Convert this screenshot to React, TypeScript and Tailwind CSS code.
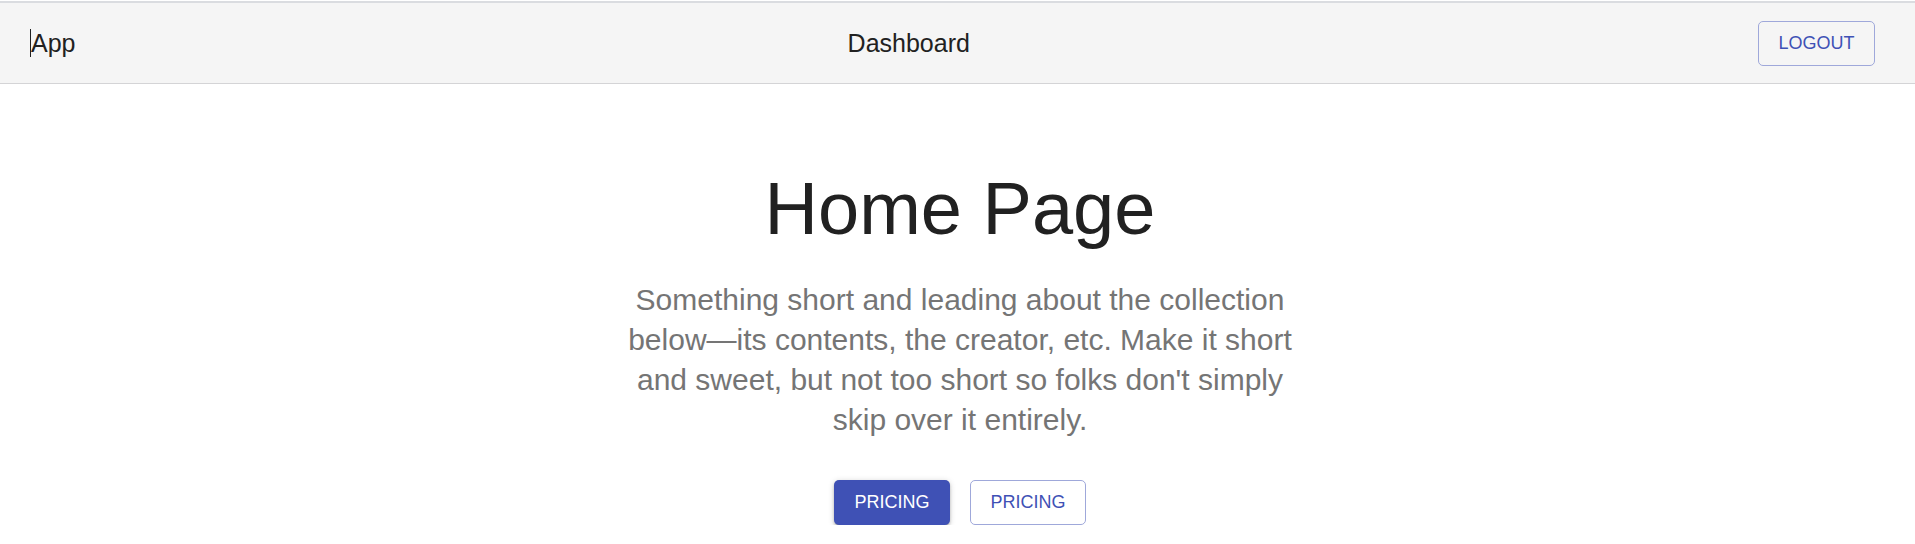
export default function App() {
  return (
    <div className="pt-px font-['Liberation_Sans',Arial,sans-serif] text-[#212121]">
      <header className="flex h-[83px] items-center border-b border-t-2 border-b-[#d4d4d6] border-t-[#dadce0] bg-[#f5f5f5] pl-[30px] pr-10">
        <h6 className="border-l border-[#212121] text-[25px] leading-7">App</h6>
        <nav className="flex-1 pr-4 text-center text-[25px] leading-7">
          <a href="#dashboard">Dashboard</a>
        </nav>
        <button className="h-[45px] min-w-[117px] rounded-[5px] border border-[#9fa8da] px-[18px] text-lg text-[#3f51b5]">LOGOUT</button>
      </header>
      <div className="pl-[5px]">
        <main className="mx-auto flex max-w-[690px] flex-col items-center pt-[81px] text-center">
          <h1 className="text-[74px] leading-[88px]">Home Page</h1>
          <p className="mt-[27px] text-[30px] leading-10 text-[#757575]">
            Something short and leading about the collection below—its contents, the creator, etc. Make it short and sweet, but not too short so folks don't simply skip over it entirely.
          </p>
          <div className="mt-10 flex gap-5">
            <button className="h-[45px] min-w-[116px] rounded-[5px] bg-[#3f51b5] px-[18px] pb-0.5 text-lg text-white [box-shadow:0_3px_1px_-2px_rgba(0,0,0,0.2),0_2px_3px_0_rgba(0,0,0,0.2),0_1px_6px_0_rgba(0,0,0,0.16)]">PRICING</button>
            <button className="h-[45px] min-w-[116px] rounded-[5px] border border-[#9fa8da] px-[18px] pb-0.5 text-lg text-[#3f51b5]">PRICING</button>
          </div>
        </main>
      </div>
    </div>
  );
}
